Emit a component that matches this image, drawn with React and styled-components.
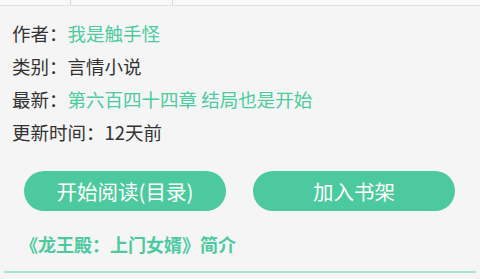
import React from "react";
import styled, { createGlobalStyle } from "styled-components";

const Global = createGlobalStyle`
  html, body { margin: 0; padding: 0; background: #f5f5f5; }
  body { font-family: "Noto Sans CJK SC", "Noto Sans", sans-serif; }
`;

const Page = styled.div`
  width: 480px;
  height: 279px;
  background: #f5f5f5;
  overflow: hidden;
  display: flex;
  flex-direction: column;
  & > * { flex-shrink: 0; }
`;

const TopStrip = styled.div`
  height: 5px;
  background: #f8f8f8;
  border-bottom: 1px solid #e2e2e2;
  display: flex;
`;

const TopCell = styled.div`
  width: ${(p) => p.$w}px;
  border-right: 1px solid #dcdcdc;
`;

const Info = styled.div`
  display: flex;
  flex-direction: column;
  padding: 11px 0 0 12px;
`;

const Row = styled.div`
  height: 33px;
  line-height: 33px;
  font-size: 18.5px;
  color: #333;
  white-space: nowrap;
`;

const Value = styled.span`
  color: ${(p) => (p.$green ? "#4ccb9f" : "#333")};
`;

const Buttons = styled.div`
  display: flex;
  justify-content: space-between;
  padding: 22px 25px 0 24px;
`;

const Button = styled.div`
  width: 202px;
  height: 40px;
  border-radius: 20px;
  background: #4cc99e;
  color: #fff;
  font-size: 20.5px;
  display: flex;
  align-items: center;
  justify-content: center;
`;

const Title = styled.div`
  margin-top: 18px;
  padding-left: 20px;
  font-size: 18px;
  font-weight: 700;
  color: #4cc99e;
  height: 30px;
  line-height: 30px;
  white-space: nowrap;
`;

const Rule = styled.div`
  margin: 12px 4px 0 4px;
  height: 2px;
  background: #a9e5cf;
`;

export default function App() {
  return (
    <Page>
      <Global />
      <TopStrip>
        <TopCell $w={70} />
        <TopCell $w={101} />
      </TopStrip>
      <Info>
        <Row>作者：<Value $green>我是触手怪</Value></Row>
        <Row>类别：<Value>言情小说</Value></Row>
        <Row>最新：<Value $green>第六百四十四章 结局也是开始</Value></Row>
        <Row>更新时间：<Value>12天前</Value></Row>
      </Info>
      <Buttons>
        <Button>开始阅读(目录)</Button>
        <Button>加入书架</Button>
      </Buttons>
      <Title>《龙王殿：上门女婿》简介</Title>
      <Rule />
    </Page>
  );
}
